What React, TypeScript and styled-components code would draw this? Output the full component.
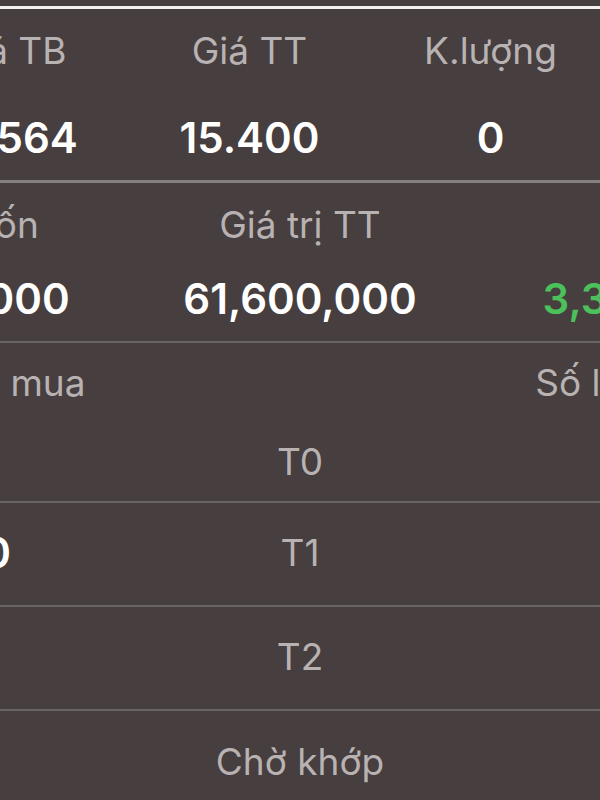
import React from "react";
import styled, { createGlobalStyle } from "styled-components";

const GlobalStyle = createGlobalStyle`
  html, body {
    margin: 0;
    padding: 0;
    background: #463e3f;
    overflow: hidden;
  }
  * { box-sizing: border-box; }
`;

const Screen = styled.div`
  width: 600px;
  height: 800px;
  overflow: hidden;
  background: #463e3f;
  font-family: Inter, "Noto Sans", sans-serif;
`;

const Canvas = styled.div`
  width: 1050px;
  margin-left: -225px;
  display: flex;
  flex-direction: column;
`;

const TopStrip = styled.div`
  height: 9px;
  border-bottom: 3px solid #f2f0f0;
`;

const StatRow = styled.div<{ $cols: number; $colW: number; $padLeft: number; $gap: number; $strong?: boolean }>`
  display: grid;
  grid-template-columns: repeat(${(p) => p.$cols}, ${(p) => p.$colW}px);
  padding-left: ${(p) => p.$padLeft}px;
  padding-top: 20px;
  padding-bottom: 16px;
  border-bottom: ${(p) => (p.$strong ? "3px solid #857e7e" : "2px solid #6a6363")};
  --gap: ${(p) => p.$gap}px;
`;

const Cell = styled.div`
  display: flex;
  flex-direction: column;
  align-items: center;
  gap: var(--gap);
  white-space: nowrap;
`;

const Label = styled.div`
  font-size: 37px;
  line-height: 1.2;
  color: #b8b2b2;
`;

const Value = styled.div<{ $tone?: "up" }>`
  font-size: 42px;
  line-height: 1.2;
  font-weight: 600;
  color: ${(p) => (p.$tone === "up" ? "#4cc05a" : "#ffffff")};
`;

const TableRow = styled.div<{ $h: number; $line?: boolean }>`
  display: grid;
  grid-template-columns: repeat(3, 350px);
  height: ${(p) => p.$h}px;
  align-items: center;
  border-bottom: ${(p) => (p.$line ? "2px solid #6a6363" : "none")};
`;

const TCell = styled.div`
  display: flex;
  justify-content: center;
  white-space: nowrap;
  font-size: 37px;
  line-height: 1.2;
  color: #b8b2b2;
`;

const TValue = styled(TCell)`
  font-size: 42px;
  font-weight: 600;
  color: #ffffff;
`;

const row1 = [
  { label: "Giá TB", value: "14.564" },
  { label: "Giá TT", value: "15.400" },
  { label: "K.lượng", value: "0" },
];

const row2 = [
  { label: "Giá trị vốn", value: "58,256,000" },
  { label: "Giá trị TT", value: "61,600,000" },
  { label: "Lãi/lỗ", value: "3,344,000", tone: "up" as const },
];

const rows = [
  { left: "", mid: "T0", right: "", h: 78 },
  { left: "4,000", mid: "T1", right: "", h: 104 },
  { left: "", mid: "T2", right: "", h: 104 },
  { left: "", mid: "Chờ khớp", right: "", h: 104 },
];

export default function App() {
  return (
    <Screen>
      <GlobalStyle />
      <Canvas>
        <TopStrip />
        <StatRow $cols={3} $colW={241} $padLeft={113} $gap={40} $strong>
          {row1.map((c) => (
            <Cell key={c.label}>
              <Label>{c.label}</Label>
              <Value>{c.value}</Value>
            </Cell>
          ))}
        </StatRow>
        <StatRow $cols={3} $colW={350} $padLeft={0} $gap={27}>
          {row2.map((c) => (
            <Cell key={c.label}>
              <Label>{c.label}</Label>
              <Value $tone={c.tone}>{c.value}</Value>
            </Cell>
          ))}
        </StatRow>
        <TableRow $h={82}>
          <TCell>Khối lượng mua</TCell>
          <TCell />
          <TCell>Số lượng bán</TCell>
        </TableRow>
        {rows.map((r, i) => (
          <TableRow key={r.mid} $h={r.h} $line={i < rows.length - 1}>
            <TValue>{r.left}</TValue>
            <TCell>{r.mid}</TCell>
            <TValue>{r.right}</TValue>
          </TableRow>
        ))}
      </Canvas>
    </Screen>
  );
}
